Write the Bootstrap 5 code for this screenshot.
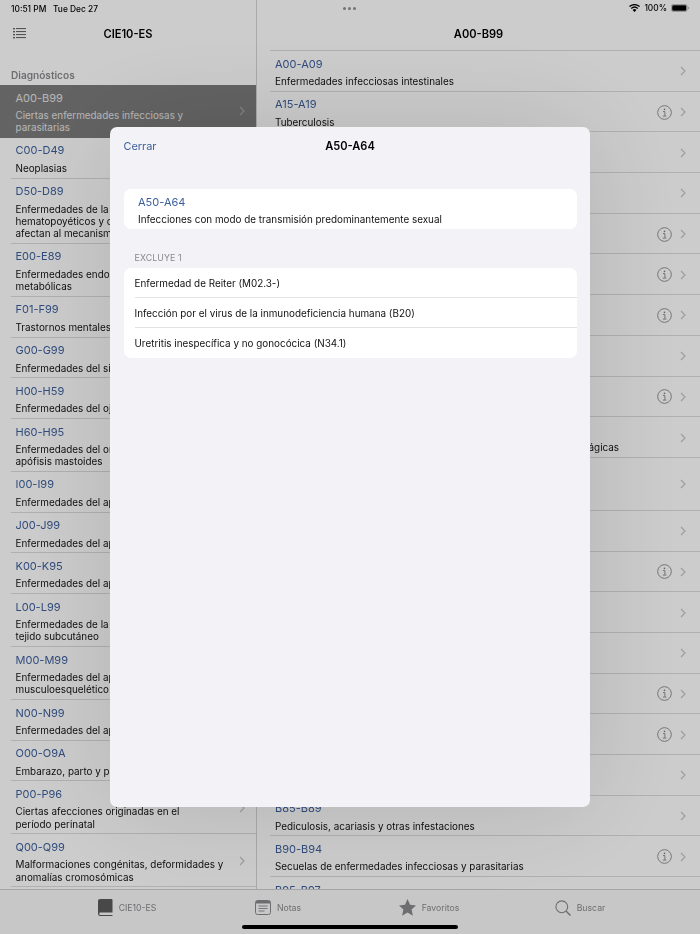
<!DOCTYPE html>
<html lang="es"><head><meta charset="utf-8"><title>CIE10-ES</title>
<link rel="stylesheet" href="https://cdn.jsdelivr.net/npm/bootstrap@5.3.0/dist/css/bootstrap.min.css">
<style>
html,body{margin:0;height:934px;overflow:hidden}
body{font-family:Inter,"Liberation Sans",sans-serif;background:#fff;color:#000;-webkit-font-smoothing:antialiased}
.app{width:700px;height:934px;position:relative;overflow:hidden;filter:blur(.3px)}
.panes{height:889px;overflow:hidden}
.side{width:257px;flex:none;border-right:1px solid #d4d4d6}
.detail{width:443px;flex:none}
.stat{height:16px;font-size:8.4px;line-height:18px;font-weight:500;padding-left:11px;white-space:nowrap}
.stat-r{padding:0 11px 0 0;position:relative}
.dots{margin-left:86px;width:14px;gap:2px}
.dots i{width:3px;height:3px;border-radius:50%;background:#8f8f8f;display:block}
.barh{height:35px;padding-top:1px;font-size:11.1px;font-weight:600;position:relative}
.burger{position:absolute;left:13px;top:11px}
.sect{height:34px;padding:18px 0 0 11px;font-size:10.1px;line-height:13px;font-weight:600;color:#8a8a8e}
.item{display:flex;align-items:center;padding-left:15.5px;padding-right:11px;position:relative}
.rlist .item{padding-left:18px;padding-right:14px}
.item::after{content:"";position:absolute;left:11px;right:0;bottom:0;height:1px;background:#dcdce0}
.rlist .item::after{left:13px}
.rtopline{height:1px;margin:-1px 0 0 13px;background:#dcdce0}
.txt{flex:1;min-width:0;padding:5.5px 0 4.5px}
.ttl{font-size:11px;line-height:15px;color:#3c5f9c;margin-bottom:3.4px;white-space:nowrap}
.sub{font-size:9.9px;line-height:12.3px;color:#111}
.sel{background:#7c7c7c}
.sel .ttl,.sel .sub{color:#e4e4e4}
.sel::after{display:none}
.sel .chev{opacity:.55}
.chev{flex:none;width:6px;height:10px;display:block}
.inf{flex:none;width:15px;height:15px;margin-right:8px;display:block}
.scrim{position:absolute;inset:0;background:rgba(0,0,0,.2)}
.sheet{position:absolute;left:110px;top:127px;width:480px;height:680px;background:#f2f2f7;border-radius:7px;box-shadow:0 0 110px rgba(0,0,0,.13);padding:0 13.5px}
.shead{height:38px;font-size:11.1px;font-weight:600;position:relative;line-height:39px;text-align:center}
.close-link{position:absolute;left:0;top:0;font-weight:400;font-size:10.9px;color:#3c5f9c;text-decoration:none}
.box{background:#fff;border-radius:7px;border:0}
.hbox{margin-top:24px;height:40px;padding:5.5px 14.5px}
.cap{font-size:8.8px;color:#8a8a8e;line-height:12px;margin:22.5px 0 4px 11px;letter-spacing:.1px}
.line{height:30px;line-height:31px;font-size:9.9px;color:#111;padding:0;margin-left:11px;border-bottom:1px solid #e2e2e6;background:transparent}
.line:last-child{border-bottom:0}
.tabs{height:45px;background:#f9f9f9;border-top:1px solid #cfcfd1;padding:0 44.5px 0 51.5px;position:relative}
.tab{width:151px;gap:6px;font-size:8.7px;line-height:12px;color:#8a8a8e;height:35px}
.tab span{padding-top:1px}
.tab svg{display:block;flex:none}
.homebar{position:absolute;left:242px;top:925px;width:216px;height:4px;border-radius:2px;background:#000;z-index:5}
</style></head><body>
<div class="app">
<svg width="0" height="0" class="position-absolute"><defs>
<symbol id="cv" viewBox="0 0 6 10"><path d="M1 1l4 4-4 4" fill="none" stroke="#c4c4c8" stroke-width="1.2"/></symbol>
<symbol id="ii" viewBox="0 0 16 16"><circle cx="8" cy="8" r="7.3" fill="none" stroke="#808083" stroke-width=".9"/><circle cx="8" cy="4.6" r=".9" fill="#808083"/><path d="M6.4 7h2v4.6M6.200 11.800h3.800" fill="none" stroke="#808083" stroke-width=".9"/></symbol>
</defs></svg>
<div class="d-flex panes">
 <div class="side">
  <div class="stat">10:51 PM&nbsp;&nbsp; Tue Dec 27</div>
  <div class="barh d-flex align-items-center justify-content-center">
   <svg class="burger" width="13" height="13" viewBox="0 0 13 13"><g fill="#6a6a6a"><rect x="0" y="1" width="2" height="1.4"/><rect x="0" y="4" width="2" height="1.4"/><rect x="0" y="7" width="2" height="1.4"/><rect x="0" y="10" width="2" height="1.4"/><rect x="3" y="1" width="10" height="1.1"/><rect x="3" y="4" width="10" height="1.1"/><rect x="3" y="7" width="10" height="1.1"/><rect x="3" y="10" width="10" height="1.1"/></g></svg>
   CIE10-ES</div>
  <div class="sect">Diagnósticos</div>
  <div class="llist">
  <div class="item sel"><div class="txt"><div class="ttl">A00-B99</div><div class="sub">Ciertas enfermedades infecciosas y<br>parasitarias</div></div><svg class="chev"><use href="#cv"/></svg></div>
  <div class="item"><div class="txt"><div class="ttl">C00-D49</div><div class="sub">Neoplasias</div></div><svg class="chev"><use href="#cv"/></svg></div>
  <div class="item"><div class="txt"><div class="ttl">D50-D89</div><div class="sub">Enfermedades de la sangre y órganos<br>hematopoyéticos y ciertos trastornos que<br>afectan al mecanismo de la inmunidad</div></div><svg class="chev"><use href="#cv"/></svg></div>
  <div class="item"><div class="txt"><div class="ttl">E00-E89</div><div class="sub">Enfermedades endocrinas, nutricionales y<br>metabólicas</div></div><svg class="chev"><use href="#cv"/></svg></div>
  <div class="item"><div class="txt"><div class="ttl">F01-F99</div><div class="sub">Trastornos mentales y del comportamiento</div></div><svg class="chev"><use href="#cv"/></svg></div>
  <div class="item"><div class="txt"><div class="ttl">G00-G99</div><div class="sub">Enfermedades del sistema nervioso</div></div><svg class="chev"><use href="#cv"/></svg></div>
  <div class="item"><div class="txt"><div class="ttl">H00-H59</div><div class="sub">Enfermedades del ojo y sus anexos</div></div><svg class="chev"><use href="#cv"/></svg></div>
  <div class="item"><div class="txt"><div class="ttl">H60-H95</div><div class="sub">Enfermedades del oído y de la<br>apófisis mastoides</div></div><svg class="chev"><use href="#cv"/></svg></div>
  <div class="item"><div class="txt"><div class="ttl">I00-I99</div><div class="sub">Enfermedades del aparato circulatorio</div></div><svg class="chev"><use href="#cv"/></svg></div>
  <div class="item"><div class="txt"><div class="ttl">J00-J99</div><div class="sub">Enfermedades del aparato respiratorio</div></div><svg class="chev"><use href="#cv"/></svg></div>
  <div class="item"><div class="txt"><div class="ttl">K00-K95</div><div class="sub">Enfermedades del aparato digestivo</div></div><svg class="chev"><use href="#cv"/></svg></div>
  <div class="item"><div class="txt"><div class="ttl">L00-L99</div><div class="sub">Enfermedades de la piel y del<br>tejido subcutáneo</div></div><svg class="chev"><use href="#cv"/></svg></div>
  <div class="item"><div class="txt"><div class="ttl">M00-M99</div><div class="sub">Enfermedades del aparato<br>musculoesquelético y del tejido conectivo</div></div><svg class="chev"><use href="#cv"/></svg></div>
  <div class="item"><div class="txt"><div class="ttl">N00-N99</div><div class="sub">Enfermedades del aparato genitourinario</div></div><svg class="chev"><use href="#cv"/></svg></div>
  <div class="item"><div class="txt"><div class="ttl">O00-O9A</div><div class="sub">Embarazo, parto y puerperio</div></div><svg class="chev"><use href="#cv"/></svg></div>
  <div class="item"><div class="txt"><div class="ttl">P00-P96</div><div class="sub">Ciertas afecciones originadas en el<br>período perinatal</div></div><svg class="chev"><use href="#cv"/></svg></div>
  <div class="item"><div class="txt"><div class="ttl">Q00-Q99</div><div class="sub">Malformaciones congénitas, deformidades y<br>anomalías cromosómicas</div></div><svg class="chev"><use href="#cv"/></svg></div>
  </div>
 </div>
 <div class="detail">
  <div class="stat stat-r d-flex align-items-center justify-content-between">
   <span class="dots d-flex"><i></i><i></i><i></i></span>
   <span class="d-flex align-items-center">
    <svg class="me-1" width="11" height="8" viewBox="0 0 11 8"><path d="M5.500 8L3.600 5.900a2.800 2.800 0 0 1 3.800 0zM2.700 5A4.200 4.200 0 0 1 8.300 5l.9-1a5.600 5.600 0 0 0-7.400 0zM.9 3.100a6.800 6.800 0 0 1 9.200 0l.9-1A8.100 8.100 0 0 0 0 2.100z" fill="#000"/></svg>
    <span class="me-1">100%</span>
    <svg width="18" height="8" viewBox="0 0 18 8"><rect x=".4" y=".4" width="15.700" height="7.200" rx="2" fill="none" stroke="#9a9a9a" stroke-width=".7"/><rect x="1.200" y="1.200" width="14.100" height="5.600" rx="1.300" fill="#000"/><path d="M17 2.700v2.600c.7-.3.900-.8.900-1.300s-.2-1-.9-1.300z" fill="#9a9a9a"/></svg>
   </span>
  </div>
  <div class="barh d-flex align-items-center justify-content-center">A00-B99</div>
  <div class="rtopline"></div>
  <div class="rlist">
  <div class="item"><div class="txt"><div class="ttl">A00-A09</div><div class="sub">Enfermedades infecciosas intestinales</div></div><svg class="chev"><use href="#cv"/></svg></div>
  <div class="item"><div class="txt"><div class="ttl">A15-A19</div><div class="sub">Tuberculosis</div></div><svg class="inf"><use href="#ii"/></svg><svg class="chev"><use href="#cv"/></svg></div>
  <div class="item"><div class="txt"><div class="ttl">A20-A28</div><div class="sub">Ciertas zoonosis bacterianas</div></div><svg class="chev"><use href="#cv"/></svg></div>
  <div class="item"><div class="txt"><div class="ttl">A30-A49</div><div class="sub">Otras enfermedades bacterianas</div></div><svg class="chev"><use href="#cv"/></svg></div>
  <div class="item"><div class="txt"><div class="ttl">A50-A64</div><div class="sub">Infecciones de transmisión sexual</div></div><svg class="inf"><use href="#ii"/></svg><svg class="chev"><use href="#cv"/></svg></div>
  <div class="item"><div class="txt"><div class="ttl">A65-A69</div><div class="sub">Otras enfermedades por espiroquetas</div></div><svg class="inf"><use href="#ii"/></svg><svg class="chev"><use href="#cv"/></svg></div>
  <div class="item"><div class="txt"><div class="ttl">A70-A74</div><div class="sub">Otras enfermedades por clamidias</div></div><svg class="inf"><use href="#ii"/></svg><svg class="chev"><use href="#cv"/></svg></div>
  <div class="item"><div class="txt"><div class="ttl">A75-A79</div><div class="sub">Rickettsiosis</div></div><svg class="chev"><use href="#cv"/></svg></div>
  <div class="item"><div class="txt"><div class="ttl">A80-A89</div><div class="sub">Infecciones virales del sistema nervioso central</div></div><svg class="inf"><use href="#ii"/></svg><svg class="chev"><use href="#cv"/></svg></div>
  <div class="item"><div class="txt"><div class="ttl">A90-A99</div><div class="sub">Fiebres virales transmitidas por artrópodos y fiebres virales hemorrágicas</div></div><svg class="chev"><use href="#cv"/></svg></div>
  <div class="item"><div class="txt"><div class="ttl">B00-B09</div><div class="sub">Infecciones virales caracterizadas por lesiones<br>de la piel y de las membranas mucosas</div></div><svg class="chev"><use href="#cv"/></svg></div>
  <div class="item"><div class="txt"><div class="ttl">B10</div><div class="sub">Otros virus herpes humanos</div></div><svg class="chev"><use href="#cv"/></svg></div>
  <div class="item"><div class="txt"><div class="ttl">B15-B19</div><div class="sub">Hepatitis viral</div></div><svg class="inf"><use href="#ii"/></svg><svg class="chev"><use href="#cv"/></svg></div>
  <div class="item"><div class="txt"><div class="ttl">B20</div><div class="sub">Enfermedad por virus de la inmunodeficiencia humana</div></div><svg class="chev"><use href="#cv"/></svg></div>
  <div class="item"><div class="txt"><div class="ttl">B25-B34</div><div class="sub">Otras enfermedades virales</div></div><svg class="chev"><use href="#cv"/></svg></div>
  <div class="item"><div class="txt"><div class="ttl">B35-B49</div><div class="sub">Micosis</div></div><svg class="inf"><use href="#ii"/></svg><svg class="chev"><use href="#cv"/></svg></div>
  <div class="item"><div class="txt"><div class="ttl">B50-B64</div><div class="sub">Enfermedades debidas a protozoos</div></div><svg class="inf"><use href="#ii"/></svg><svg class="chev"><use href="#cv"/></svg></div>
  <div class="item"><div class="txt"><div class="ttl">B65-B83</div><div class="sub">Helmintiasis</div></div><svg class="chev"><use href="#cv"/></svg></div>
  <div class="item"><div class="txt"><div class="ttl">B85-B89</div><div class="sub">Pediculosis, acariasis y otras infestaciones</div></div><svg class="chev"><use href="#cv"/></svg></div>
  <div class="item"><div class="txt"><div class="ttl">B90-B94</div><div class="sub">Secuelas de enfermedades infecciosas y parasitarias</div></div><svg class="inf"><use href="#ii"/></svg><svg class="chev"><use href="#cv"/></svg></div>
  <div class="item"><div class="txt"><div class="ttl">B95-B97</div><div class="sub">Agentes bacterianos, virales y otros</div></div><svg class="chev"><use href="#cv"/></svg></div>
  </div>
 </div>
</div>
<div class="tabs d-flex">
 <div class="tab d-flex align-items-center justify-content-center">
  <svg width="15" height="17" viewBox="0 0 15 17"><path d="M2 0h11.500a1 1 0 0 1 1 1v12.500H2.500a1.300 1.300 0 0 0 0 2.600h12v.9H2.300A2.300 2.300 0 0 1 0 14.700V2a2 2 0 0 1 2-2z" fill="#5a5a5c"/></svg>
  <span>CIE10-ES</span></div>
 <div class="tab d-flex align-items-center justify-content-center">
  <svg width="16" height="15" viewBox="0 0 16 15"><rect x=".5" y=".5" width="15" height="14" rx="2" fill="none" stroke="#8a8a8e"/><rect x="1" y="1" width="14" height="2.500" fill="#8a8a8e"/><path d="M3.500 6h9M3.500 8.500h9M3.500 11h6" stroke="#8a8a8e" stroke-width=".9"/></svg>
  <span>Notas</span></div>
 <div class="tab d-flex align-items-center justify-content-center">
  <svg width="17" height="17" viewBox="0 0 17 17"><path d="M8.500 0l2.600 5.800 6 .6-4.500 4.100 1.300 6.200-5.400-3.200-5.400 3.200 1.300-6.200L0 6.400l6-.6z" fill="#8a8a8e"/></svg>
  <span>Favoritos</span></div>
 <div class="tab d-flex align-items-center justify-content-center">
  <svg width="16" height="16" viewBox="0 0 16 16"><circle cx="6.800" cy="6.800" r="5.900" fill="none" stroke="#8a8a8e" stroke-width="1.100"/><path d="M11 11l4.500 4.500" stroke="#8a8a8e" stroke-width="1.500"/></svg>
  <span>Buscar</span></div>
</div>
<div class="scrim"></div>
<div class="sheet">
 <div class="shead"><a class="close-link" href="#">Cerrar</a>A50-A64</div>
 <div class="box hbox"><div class="ttl">A50-A64</div><div class="sub">Infecciones con modo de transmisión predominantemente sexual</div></div>
 <div class="cap">EXCLUYE 1</div>
 <div class="box">
  <div class="line">Enfermedad de Reiter (M02.3-)</div>
  <div class="line">Infección por el virus de la inmunodeficiencia humana (B20)</div>
  <div class="line">Uretritis inespecífica y no gonocócica (N34.1)</div>
 </div>
</div>
<div class="homebar"></div>
</div>
</body></html>
